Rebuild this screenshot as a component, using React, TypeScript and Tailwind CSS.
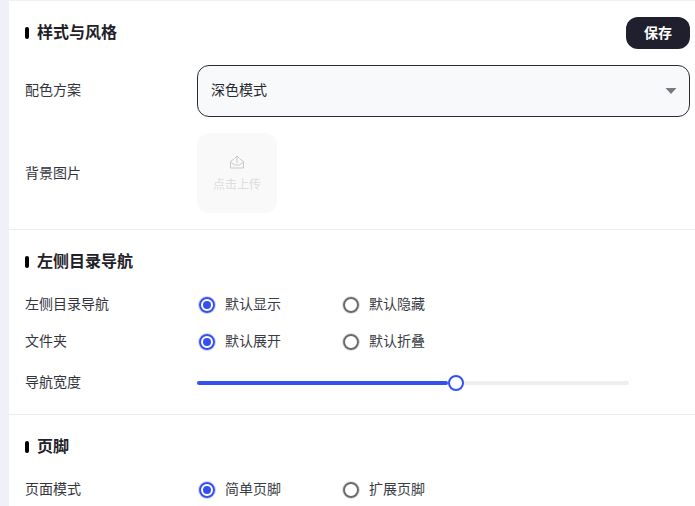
import React from 'react';

const font = { fontFamily: '"Liberation Sans", "Noto Sans CJK SC", sans-serif' };

function SectionTitle({ children }: { children: React.ReactNode }) {
  return (
    <div className="flex items-center h-6">
      <span className="w-[4px] h-[12px] rounded-full bg-black mr-[8px]" />
      <span className="text-[16px] leading-[24px] font-bold text-[#1f2129]">{children}</span>
    </div>
  );
}

function Radio({ checked, label, width }: { checked?: boolean; label: string; width: string }) {
  return (
    <div className={`flex items-center pl-[2px] ${width}`}>
      {checked ? (
        <span className="w-[16px] h-[16px] mt-px rounded-full border-[2px] border-[#3451f0] ring-1 ring-[#ccd3fb] flex items-center justify-center">
          <span className="w-[8px] h-[8px] rounded-full bg-[#3451f0]" />
        </span>
      ) : (
        <span className="w-[16px] h-[16px] mt-px rounded-full border-[2px] border-[#6b6b6b] ring-1 ring-[#e0e0e0]" />
      )}
      <span className="ml-[10px] text-[14px] leading-[20px] text-[#3a3d45]">{label}</span>
    </div>
  );
}

function RadioRow({ label, a, b, className }: { label: string; a: string; b: string; className: string }) {
  return (
    <div className={`flex items-center ${className}`}>
      <span className="w-[172px] text-[14px] leading-[20px] text-[#33353c]">{label}</span>
      <Radio checked label={a} width="w-[144px]" />
      <Radio label={b} width="w-[144px]" />
    </div>
  );
}

export default function App() {
  return (
    <div className="w-[695px] h-[506px] overflow-hidden bg-[#f0f1f8] pl-[9px] pt-px" style={font}>
      <div className="h-full bg-white">
        <section className="h-[229px] border-b border-[#ececf0] pl-[16px] pt-[16px] pr-[5px]">
          <div className="flex items-center justify-between">
            <SectionTitle>样式与风格</SectionTitle>
            <button className="w-[64px] h-[32px] rounded-[12px] bg-[#1f1f2e] text-white text-[14px] font-bold">保存</button>
          </div>
          <div className="flex items-center mt-[16px]">
            <span className="w-[172px] pb-[2px] text-[14px] leading-[20px] text-[#33353c]">配色方案</span>
            <div className="flex-1 h-[52px] rounded-[12px] border border-[#2b2b38] bg-[#f8f9fb] flex items-center justify-between pl-[13px] pr-[12px]">
              <span className="pb-[2px] text-[14px] leading-[20px] text-[#26282f]">深色模式</span>
              <svg width="12" height="6" viewBox="0 0 12 6">
                <path d="M0.5 0h11L6 6z" fill="#777a82" />
              </svg>
            </div>
          </div>
          <div className="flex items-center mt-[16px]">
            <span className="w-[172px] text-[14px] leading-[20px] text-[#33353c]">背景图片</span>
            <div className="w-[80px] h-[80px] pt-[2px] rounded-[12px] bg-[#f9f9fa] flex flex-col items-center justify-center">
              <svg width="16" height="14" viewBox="0 0 16 14" fill="none" stroke="#c9c9cc" strokeWidth="1">
                <path d="M5 4 1.5 6.5v6.5h13V6.5L11 4" />
                <path d="M1.5 7l4 3h5l4-3" />
                <path d="M8 8V1M5.5 3.5 8 1l2.5 2.5" />
              </svg>
              <span className="mt-[7px] text-[12px] leading-[18px] text-[#dcdcde]">点击上传</span>
            </div>
          </div>
        </section>

        <section className="h-[185px] border-b border-[#ececf0] pl-[16px] pt-[20px]">
          <SectionTitle>左侧目录导航</SectionTitle>
          <RadioRow label="左侧目录导航" a="默认显示" b="默认隐藏" className="mt-[20px]" />
          <RadioRow label="文件夹" a="默认展开" b="默认折叠" className="mt-[17px]" />
          <div className="flex items-center mt-[21px]">
            <span className="w-[172px] text-[14px] leading-[20px] text-[#33353c]">导航宽度</span>
            <div className="w-[432px] h-[4px] mt-[2px] rounded-full bg-[#eeeeee] flex items-center">
              <div className="w-[251px] h-[4px] rounded-full bg-[#3451f0]" />
              <span className="w-[16px] h-[16px] rounded-full border-[2px] border-[#3451f0] bg-white shrink-0" />
            </div>
          </div>
        </section>

        <section className="pl-[16px] pt-[20px]">
          <SectionTitle>页脚</SectionTitle>
          <RadioRow label="页面模式" a="简单页脚" b="扩展页脚" className="mt-[20px]" />
        </section>
      </div>
    </div>
  );
}
